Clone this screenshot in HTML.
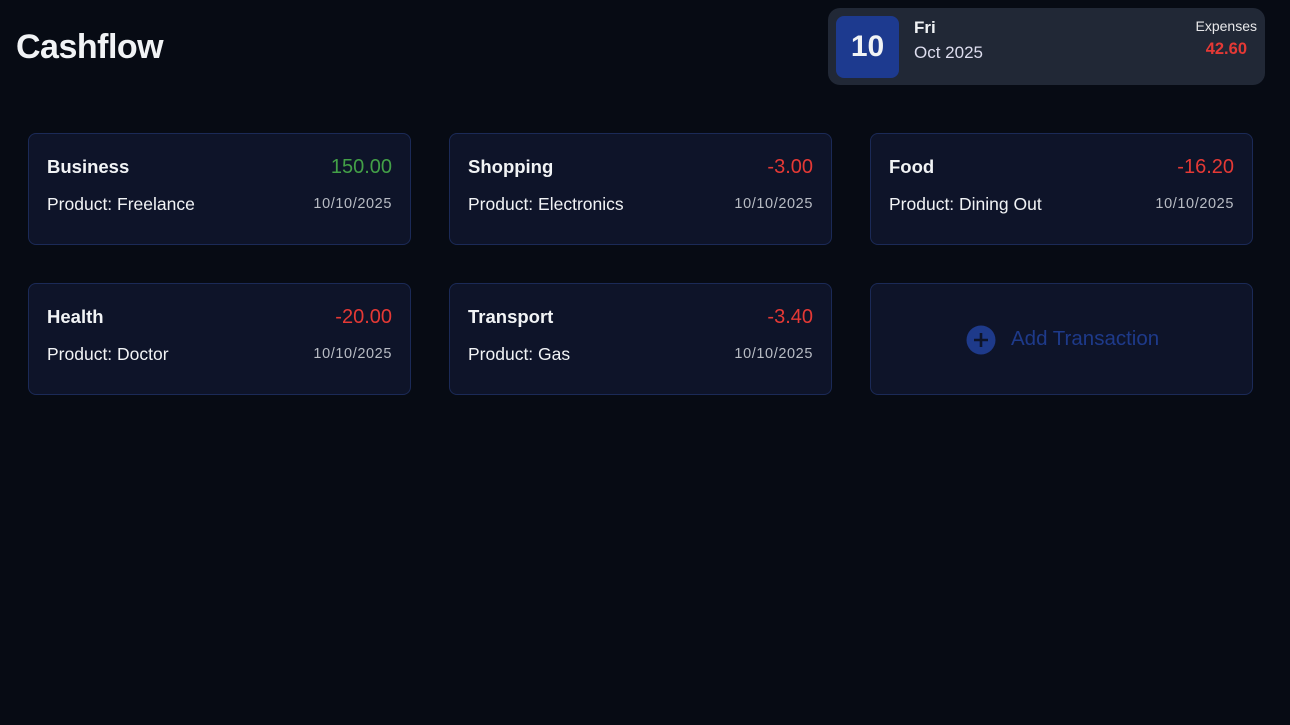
<!DOCTYPE html>
<html><head><meta charset="utf-8"><style>
*{margin:0;padding:0;box-sizing:border-box}
body{width:1290px;height:725px;background:#070b14;font-family:"Liberation Sans",sans-serif;color:#f1f3f5;position:relative;overflow:hidden}
.abs{position:absolute}
h1{position:absolute;left:16px;top:28px;font-size:34px;font-weight:bold;letter-spacing:-0.5px}
.hdr{left:828px;top:8px;width:437px;height:77px;background:#212836;border-radius:12px}
.day{left:8px;top:8px;width:63px;height:62px;background:#1d3a8f;border-radius:8px;font-size:30px;font-weight:bold;text-align:center;line-height:62px}
.card{width:383px;height:112px;background:#0e1429;border:1px solid #1b2a57;border-radius:8px}
.t{position:absolute;left:18px;top:22px;font-size:18.5px;font-weight:bold}
.amt{position:absolute;right:18px;top:22px;font-size:20px}
.p{position:absolute;left:18px;top:60px;font-size:17.5px}
.d{position:absolute;right:18px;top:62px;font-size:14.5px;letter-spacing:0.6px;color:#b8bcc4}
.red{color:#e53935}.grn{color:#43a047}
</style></head><body>
<h1>Cashflow</h1>
<div class="abs hdr">
 <div class="abs day">10</div>
 <div class="abs" style="left:86px;top:10px;font-size:17px;font-weight:bold">Fri</div>
 <div class="abs" style="left:86px;top:35px;font-size:17px;color:#dde">Oct 2025</div>
 <div class="abs" style="right:8px;top:10px;font-size:14px;color:#e8e8ea">Expenses</div>
 <div class="abs red" style="right:18px;top:32px;font-size:16.5px;font-weight:bold">42.60</div>
</div>

<div class="abs card" style="left:28px;top:133px"><div class="t">Business</div><div class="amt grn">150.00</div><div class="p">Product: Freelance</div><div class="d">10/10/2025</div></div>
<div class="abs card" style="left:449px;top:133px"><div class="t">Shopping</div><div class="amt red">-3.00</div><div class="p">Product: Electronics</div><div class="d">10/10/2025</div></div>
<div class="abs card" style="left:870px;top:133px"><div class="t">Food</div><div class="amt red">-16.20</div><div class="p">Product: Dining Out</div><div class="d">10/10/2025</div></div>
<div class="abs card" style="left:28px;top:283px"><div class="t">Health</div><div class="amt red">-20.00</div><div class="p">Product: Doctor</div><div class="d">10/10/2025</div></div>
<div class="abs card" style="left:449px;top:283px"><div class="t">Transport</div><div class="amt red">-3.40</div><div class="p">Product: Gas</div><div class="d">10/10/2025</div></div>
<div class="abs card" style="left:870px;top:283px">
 <svg class="abs" style="left:95px;top:41px" width="30" height="30" viewBox="0 0 30 30"><circle cx="15" cy="15" r="14.5" fill="#1e3a8a"/><path d="M15 8v14M8 15h14" stroke="#0e1429" stroke-width="2.6"/></svg>
 <div class="abs" style="left:140px;top:43px;font-size:20.5px;color:#1e3a8a">Add Transaction</div>
</div>
</body></html>
